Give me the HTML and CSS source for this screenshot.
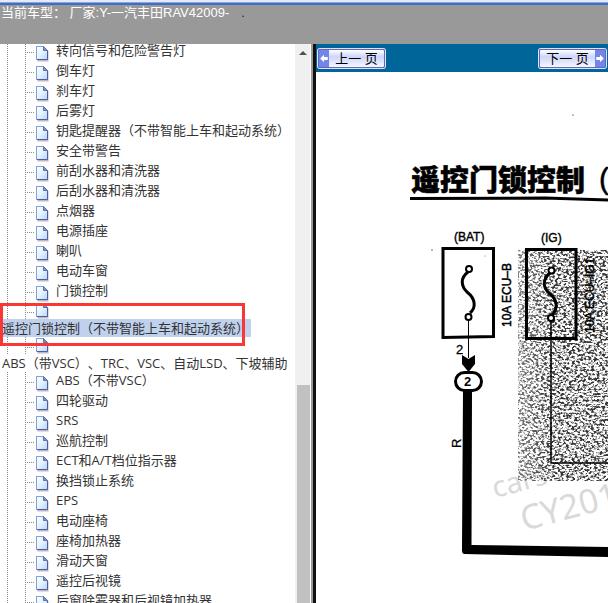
FILE: index.html
```html
<!DOCTYPE html>
<html lang="zh-CN">
<head>
<meta charset="utf-8">
<title>RAV4 2009</title>
<link rel="stylesheet" href="styles.css">
</head>
<body>
<svg class="defs" aria-hidden="true">
  <defs>
    <linearGradient id="paper" x1="0" y1="0" x2="1" y2="1">
      <stop offset="0" stop-color="#ffffff"/><stop offset=".5" stop-color="#e4f1fe"/><stop offset="1" stop-color="#b4d6fa"/>
    </linearGradient>
    <symbol id="page" viewBox="0 0 14 16">
      <path d="M1.500 14.500H11.500V5" fill="none" stroke="#b9b9c8" stroke-width="2"/>
      <path d="M.5.500H7.500L11.500 4.500V13.500H.5Z" fill="url(#paper)" stroke="#7488c6"/>
      <path d="M.5 13V.5H7" fill="none" stroke="#7ba2dc"/>
      <path d="M7.500.5V4.500H11.500Z" fill="#8494c8" stroke="#5f70b0"/>
      <path d="M11.500 5V13.500H1" fill="none" stroke="#545b9a"/>
    </symbol>
  </defs>
</svg>
<header class="top">
  <div class="edge"></div>
  <p class="model">当前车型： 厂家:Y-一汽丰田RAV42009-<span class="dot">.</span></p>
</header>
<main class="frames">
  <nav class="side">
    <ul class="tree">
      <li><svg class="ico"><use href="#page"/></svg><a href="#">转向信号和危险警告灯</a></li>
      <li><svg class="ico"><use href="#page"/></svg><a href="#">倒车灯</a></li>
      <li><svg class="ico"><use href="#page"/></svg><a href="#">刹车灯</a></li>
      <li><svg class="ico"><use href="#page"/></svg><a href="#">后雾灯</a></li>
      <li><svg class="ico"><use href="#page"/></svg><a href="#">钥匙提醒器（不带智能上车和起动系统）</a></li>
      <li><svg class="ico"><use href="#page"/></svg><a href="#">安全带警告</a></li>
      <li><svg class="ico"><use href="#page"/></svg><a href="#">前刮水器和清洗器</a></li>
      <li><svg class="ico"><use href="#page"/></svg><a href="#">后刮水器和清洗器</a></li>
      <li><svg class="ico"><use href="#page"/></svg><a href="#">点烟器</a></li>
      <li><svg class="ico"><use href="#page"/></svg><a href="#">电源插座</a></li>
      <li><svg class="ico"><use href="#page"/></svg><a href="#">喇叭</a></li>
      <li><svg class="ico"><use href="#page"/></svg><a href="#">电动车窗</a></li>
      <li><svg class="ico"><use href="#page"/></svg><a href="#">门锁控制</a></li>
      <li class="wrapped marked"><svg class="ico"><use href="#page"/></svg><a class="selected" href="#">遥控门锁控制（不带智能上车和起动系统）</a></li>
      <li class="wrapped"><svg class="ico"><use href="#page"/></svg><a href="#">ABS（带VSC）、TRC、VSC、自动LSD、下坡辅助</a></li>
      <li><svg class="ico"><use href="#page"/></svg><a href="#">ABS（不带VSC）</a></li>
      <li><svg class="ico"><use href="#page"/></svg><a href="#">四轮驱动</a></li>
      <li><svg class="ico"><use href="#page"/></svg><a href="#">SRS</a></li>
      <li><svg class="ico"><use href="#page"/></svg><a href="#">巡航控制</a></li>
      <li><svg class="ico"><use href="#page"/></svg><a href="#">ECT和A/T档位指示器</a></li>
      <li><svg class="ico"><use href="#page"/></svg><a href="#">换挡锁止系统</a></li>
      <li><svg class="ico"><use href="#page"/></svg><a href="#">EPS</a></li>
      <li><svg class="ico"><use href="#page"/></svg><a href="#">电动座椅</a></li>
      <li><svg class="ico"><use href="#page"/></svg><a href="#">座椅加热器</a></li>
      <li><svg class="ico"><use href="#page"/></svg><a href="#">滑动天窗</a></li>
      <li><svg class="ico"><use href="#page"/></svg><a href="#">遥控后视镜</a></li>
      <li><svg class="ico"><use href="#page"/></svg><a href="#">后窗除雾器和后视镜加热器</a></li>
    </ul>
    <div class="scroll">
      <svg class="up" viewBox="0 0 15 15"><path d="M4 11L8 7L12 11Z" fill="#505050"/></svg>
      <div class="thumb"></div>
    </div>
  </nav>
  <section class="content">
    <div class="pager">
      <button class="page-btn" type="button"><svg class="arrow" viewBox="0 0 10 18"><path d="M1 9L5 5V7.500H9V10.500H5V13Z" fill="#fff"/></svg><span>上一 页</span></button>
      <button class="page-btn" type="button"><span>下一 页</span><svg class="arrow" viewBox="0 0 10 18"><path d="M9 9L5 5V7.500H1V10.500H5V13Z" fill="#fff"/></svg></button>
    </div>
    <div class="sheet">
      <svg class="diagram" width="292" height="531" viewBox="316 72 292 531">
        <defs>
          <filter id="grain" x="0" y="0" width="1" height="1" color-interpolation-filters="sRGB">
            <feTurbulence type="fractalNoise" baseFrequency=".36 .46" numOctaves="2" seed="7"/>
            <feColorMatrix values="0 0 0 0 .12  0 0 0 0 .12  0 0 0 0 .12  5 0 0 0 -2.200"/>
          </filter>
          <linearGradient id="fade" x1="0" y1="0" x2="1" y2="0">
            <stop offset="0" stop-color="#fff" stop-opacity=".4"/><stop offset=".4" stop-color="#fff" stop-opacity=".1"/>
          </linearGradient>
        </defs>
        <g class="watermark">
          <text class="wm-small" transform="translate(495 498) rotate(-15)">cars</text>
          <text class="wm-large" transform="translate(524 531) rotate(-15)">CY2010</text>
        </g>
        <rect x="518" y="250" width="90" height="231" filter="url(#grain)"/>
        <rect x="518" y="250" width="90" height="231" fill="url(#fade)"/>
        <text class="title" x="411" y="191">遥控门锁控制</text>
        <text class="title-paren" x="599" y="189">(</text>
        <path d="M410 198.500L545 198L608 200" fill="none" stroke="#000" stroke-width="3"/>
        <text class="label" x="454" y="241">(BAT)</text>
        <text class="label" x="541" y="242">(IG)</text>
        <g fill="none" stroke="#000">
          <path d="M443 248.500H493.500V336.500L443 337.500Z" stroke-width="3"/>
          <path d="M526.500 249.500H576V338.500H526.500Z" stroke-width="3"/>
          <path d="M468 272C460 278 461 286 467 292C476 299 476 308 470 313" stroke-width="3"/>
          <path d="M550 273C542 280 543 287 549 293C558 300 558 309 552 315" stroke-width="3"/>
          <path d="M468.500 319V358" stroke-width="1"/>
          <path d="M551 320V463H608" stroke-width="1.500"/>
          <g fill="#fff" stroke-width="2"><circle cx="469" cy="269" r="3"/><circle cx="468.500" cy="317" r="3"/><circle cx="551.500" cy="270.500" r="3"/><circle cx="551" cy="318" r="3"/></g>
        </g>
        <path d="M462 355L468.500 359L475 355V364L468.500 372L462 364Z"/>
        <path d="M463 391H472L471.500 545L608 547V557L464 554Q461.500 553 462 549Z"/>
        <rect x="455.500" y="372.500" width="26" height="18" rx="9" fill="#fff" stroke="#000" stroke-width="3"/>
        <text class="pin" x="464" y="386">2</text>
        <text class="wire" x="456" y="354">2</text>
        <text class="fuse" transform="translate(511 327) rotate(-90)">10A ECU–B</text>
        <text class="fuse" transform="translate(594 333) rotate(-90)">10A ECU–IG1</text>
        <text class="wire" transform="translate(461 448) rotate(-90)">R</text>
        <g fill="#555"><circle cx="573" cy="115" r=".7"/><circle cx="432" cy="250" r=".8"/><circle cx="485" cy="256" r=".5"/></g>
      </svg>
    </div>
  </section>
</main>
</body>
</html>
```
FILE: styles.css
```css
*, *::after { box-sizing: border-box; }
body {
  margin: 0;
  height: 100vh;
  overflow: hidden;
  display: flex;
  flex-direction: column;
  background: #fff;
  color: #333;
  font: 13px/20px "Open Sans", "Noto Sans CJK SC", sans-serif;
  text-spacing-trim: space-all;
}
.defs { position: absolute; width: 0; height: 0; }

.top { height: 44px; flex: none; background: #999; }
.edge { height: 5px; background: linear-gradient(#e4eaf8 0 2px, #8ba6df 2px 3px, #426bc4 3px); }
.model {
  margin: 0;
  padding-left: 1px;
  color: #fff;
  font: 13px/16px "Liberation Sans", "Noto Sans CJK SC", sans-serif;
  white-space: nowrap;
}
.dot { margin-left: 12px; color: #222; }

.frames { flex: 1; min-height: 0; display: grid; grid-template-columns: 316px 1fr; }
.side {
  display: flex;
  min-width: 0;
  min-height: 0;
  overflow: hidden;
  border-right: 3px solid #111;
  box-shadow: inset -2px 0 #999;
}
.tree { flex: 1; min-width: 0; margin: -2px 0 0; padding: 0; list-style: none; overflow: hidden; }
.tree li {
  display: flex;
  height: 20px;
  padding-left: 36px;
  white-space: nowrap;
  background:
    repeating-linear-gradient(#888 0 1px, transparent 1px 2px) 7px 0 / 1px 100% no-repeat,
    repeating-linear-gradient(#888 0 1px, transparent 1px 2px) 25px 0 / 1px 100% no-repeat,
    repeating-linear-gradient(90deg, #888 0 1px, transparent 1px 2px) 25px 10px / 10px 1px no-repeat;
}
.ico { width: 14px; height: 16px; margin-top: 4px; flex: none; }
.tree a { margin-left: 6px; line-height: 17px; color: #333; text-decoration: none; }
.tree .wrapped {
  flex-direction: column;
  align-items: flex-start;
  height: 35px;
  padding-left: 0;
  background-size: 1px 17px, 1px 17px, 10px 1px;
}
.wrapped .ico { height: 16px; margin: 1px 0 0 36px; }
.tree .wrapped a { margin: 0; padding-left: 2px; line-height: 18px; }
.tree .wrapped .selected { padding-right: 2px; background: #bfd1ed; }
.marked { position: relative; }
.marked::after {
  content: "";
  position: absolute;
  top: 1px;
  left: 0;
  width: 245px;
  height: 43px;
  border: 3px solid #fa3734;
}
.scroll { width: 15px; margin-right: 3px; flex: none; display: flex; flex-direction: column; background: #f0f0f0; }
.up { width: 15px; height: 15px; }
.thumb { margin: auto 0 0 2px; height: 39%; background: #c1c1c1; }

.content { min-width: 0; display: flex; flex-direction: column; overflow: hidden; }
.pager {
  height: 28px;
  flex: none;
  display: flex;
  justify-content: space-between;
  align-items: center;
  padding: 0 2px;
  background: #069;
}
.page-btn {
  display: flex;
  width: 67px;
  height: 19px;
  padding: 0;
  border: 1px solid #6666bd;
  border-radius: 2px;
  background: linear-gradient(#fff, #cdd5fb 40%, #f4f6ff);
  color: #000;
  font: 13px/18px "Liberation Sans", "Noto Sans CJK SC", sans-serif;
  white-space: nowrap;
  box-shadow: 0 0 0 1px #dfe3fa;
}
.page-btn span { flex: 1; }
.arrow { width: 10px; height: 17px; flex: none; background: #7584e8; }
.sheet { flex: 1; min-height: 0; overflow: hidden; background: #fff; }
.diagram { display: block; font-family: "Liberation Sans", "Noto Sans CJK SC", sans-serif; }
.title { font: 900 29px "Noto Sans CJK SC", sans-serif; stroke: #000; stroke-width: .5px; }
.title-paren { font-size: 30px; stroke: #000; stroke-width: .5px; }
.label { font-size: 12px; stroke: #000; stroke-width: .4px; }
.fuse { font-size: 12px; stroke: #000; stroke-width: .5px; }
.wire { font-size: 13px; stroke: #000; stroke-width: .3px; }
.pin { font-size: 13px; font-weight: 700; }
.watermark { fill: #d9d9d9; font-family: "Noto Sans", sans-serif; }
.wm-small { font-size: 29px; }
.wm-large { font-size: 34px; }
```
